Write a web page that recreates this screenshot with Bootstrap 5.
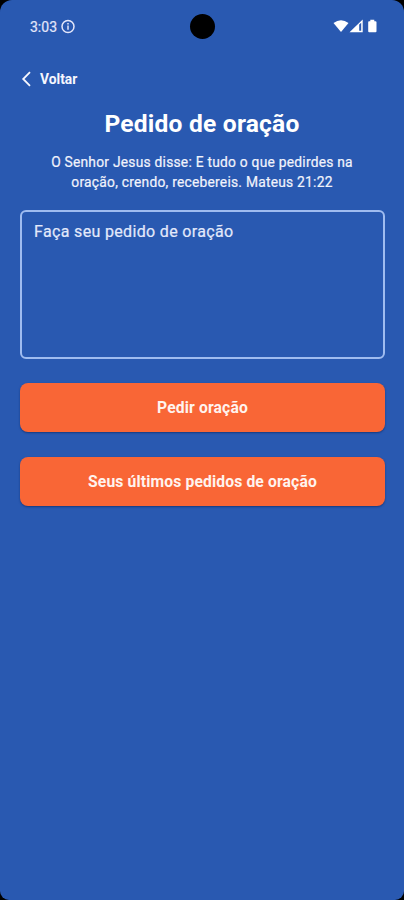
<!DOCTYPE html>
<html lang="pt-BR">
<head>
<meta charset="utf-8">
<meta name="viewport" content="width=device-width, initial-scale=1">
<title>Pedido de oração</title>
<link href="https://cdn.jsdelivr.net/npm/bootstrap@5.3.0/dist/css/bootstrap.min.css" rel="stylesheet">
<style>
html, body { height: 100%; background: #000; }
body { font-family: Roboto, sans-serif; overflow: hidden; }
.screen { height: 900px; background: #2959b1; border-radius: 12px 12px 9px 9px; color: #f1f3fc; }
.status-bar { height: 52px; padding: 0 26px 0 30px; }
.clock { font-size: 14px; line-height: 20px; padding-top: 1px; color: #e3e6fa; -webkit-text-stroke: .2px #e3e6fa; }
.camera { width: 25px; height: 25px; background: #000; left: 190px; top: 14px; }
.back-link { height: 20px; margin-top: 17px; padding-left: 21px; font-size: 13.8px; line-height: 20px; color: #f6f7fe; }
.page-title { margin-top: 19px; font-size: 24.6px; line-height: 32px; letter-spacing: .2px; color: #fff; }
.verse { margin-top: 12px; font-size: 13.8px; line-height: 20px; letter-spacing: .24px; -webkit-text-stroke: .2px #f1f3fc; }
.prayer-input, .prayer-input:focus { height: 149px; padding: 10px 12px; border: 2px solid #9fbcf0; border-radius: 6px; font-size: 16px; line-height: 20px; letter-spacing: .34px; resize: none; background: transparent; color: #fff; }
.prayer-input::placeholder { color: #e3e9fb; opacity: 1; -webkit-text-stroke: .2px #e3e9fb; }
.btn-prayer { --bs-btn-bg: #f96636; --bs-btn-color: #fff3ee; --bs-btn-hover-bg: #ef5b2b; --bs-btn-hover-color: #fff; height: 49px; border: 0; border-radius: 8px; font-size: 15.7px; line-height: 20px; letter-spacing: .13px; box-shadow: 0 1px 2px rgba(12,42,100,.65); }
.btn-prayer + .btn-prayer { margin-top: 25px; }
.form-area { padding: 0 19px 0 20px; margin-top: 18px; }
</style>
</head>
<body>
<main class="screen position-relative overflow-hidden">
  <header class="status-bar d-flex align-items-center justify-content-between">
    <div class="d-flex align-items-center">
      <span class="clock">3:03</span>
      <svg class="ms-1" width="15" height="15" viewBox="0 0 15 15" fill="none" stroke="#e3e6fa" aria-hidden="true"><circle cx="7" cy="7.5" r="6" stroke-width="1.5"/><path d="M7 6.5v4.3M7 4v1.5" stroke-width="1.5"/></svg>
    </div>
    <svg width="46" height="16" viewBox="0 0 46 16" fill="#fff" aria-hidden="true">
      <path d="M1.5 5Q9 -.7 16.5 5L9 14Z"/>
      <path fill-rule="evenodd" d="M17.5 14.2 30.7 1.5V14.2ZM27.2 6.6V12.8H29.2V4.7Z"/>
      <path d="M37 3.3h1.3V1.8h4v1.5h1.2q1 0 1 1v9q0 1-1 1h-6.3q-1 0-1-1v-9q0-1 .8-1Z"/>
    </svg>
    <span class="camera rounded-circle position-absolute"></span>
  </header>
  <a href="#" class="back-link d-flex align-items-center fw-bold text-decoration-none">
    <svg width="11" height="16" viewBox="0 0 11 16" fill="none" stroke="#f6f7fe" stroke-width="1.8" aria-hidden="true"><path d="M9 1.2 2.2 8 9 14.8"/></svg>
    <span class="ms-2">Voltar</span>
  </a>
  <h1 class="page-title mb-0 text-center fw-bold">Pedido de oração</h1>
  <p class="verse mb-0 text-center">O Senhor Jesus disse: E tudo o que pedirdes na<br>oração, crendo, recebereis. Mateus 21:22</p>
  <form class="form-area d-flex flex-column">
    <textarea class="prayer-input form-control shadow-none" placeholder="Faça seu pedido de oração" aria-label="Pedido de oração"></textarea>
    <button type="button" class="btn btn-prayer fw-bold w-100 mt-4">Pedir oração</button>
    <button type="button" class="btn btn-prayer fw-bold w-100">Seus últimos pedidos de oração</button>
  </form>
</main>
<script src="https://cdn.jsdelivr.net/npm/bootstrap@5.3.0/dist/js/bootstrap.bundle.min.js"></script>
</body>
</html>
